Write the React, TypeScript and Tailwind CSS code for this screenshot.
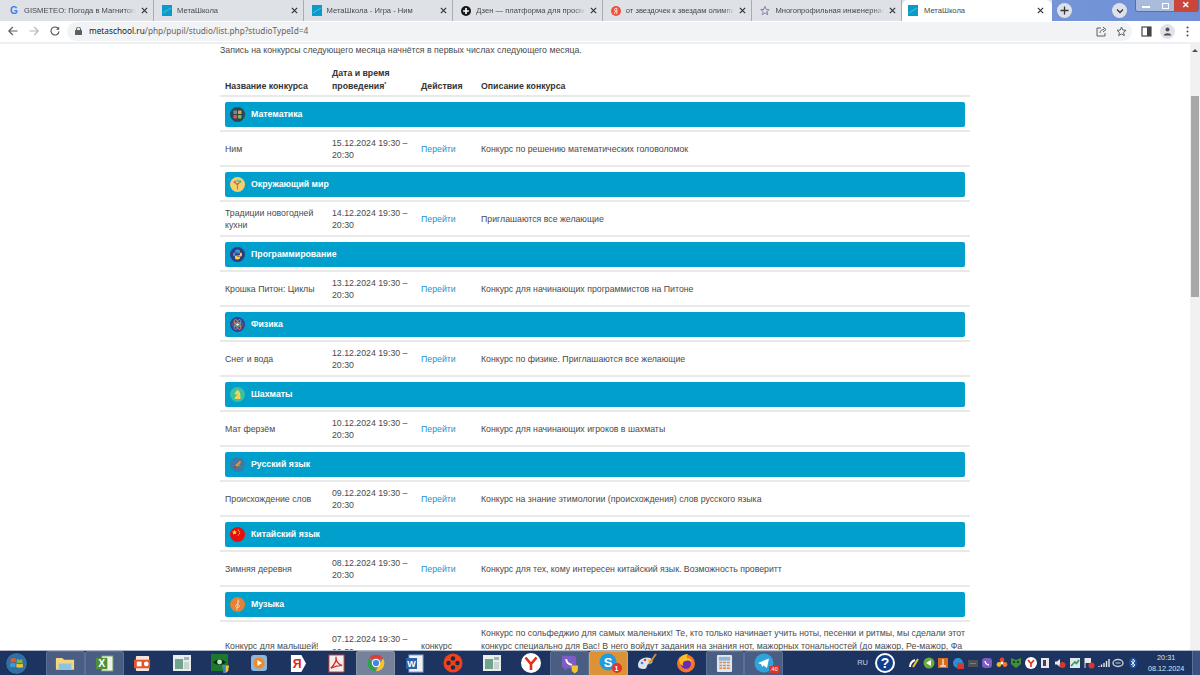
const tabs = [
  { title: "GISMETEO: Погода в Магнитогорске", icon: "g" },
  { title: "МетаШкола", icon: "meta" },
  { title: "МетаШкола - Игра - Ним", icon: "meta" },
  { title: "Дзен — платформа для просмотра", icon: "dzen" },
  { title: "от звездочек к звездам олимпиада", icon: "ya" },
  { title: "Многопрофильная инженерная олимпиада", icon: "star" },
];

const sections = [
  { name: "Математика", icon: "math", title: "Ним", date: "15.12.2024 19:30 – 20:30", text: "Конкурс по решению математических головоломок" },
  { name: "Окружающий мир", icon: "world", title: "Традиции новогодней кухни", date: "14.12.2024 19:30 – 20:30", text: "Приглашаются все желающие" },
  { name: "Программирование", icon: "python", title: "Крошка Питон: Циклы", date: "13.12.2024 19:30 – 20:30", text: "Конкурс для начинающих программистов на Питоне" },
  { name: "Физика", icon: "physics", title: "Снег и вода", date: "12.12.2024 19:30 – 20:30", text: "Конкурс по физике. Приглашаются все желающие" },
  { name: "Шахматы", icon: "chess", title: "Мат ферзём", date: "10.12.2024 19:30 – 20:30", text: "Конкурс для начинающих игроков в шахматы" },
  { name: "Русский язык", icon: "russian", title: "Происхождение слов", date: "09.12.2024 19:30 – 20:30", text: "Конкурс на знание этимологии (происхождения) слов русского языка" },
  { name: "Китайский язык", icon: "china", title: "Зимняя деревня", date: "08.12.2024 19:30 – 20:30", text: "Конкурс для тех, кому интересен китайский язык. Возможность проверитт" },
];

function TabIcon({ kind }: { kind: string }) {
  if (kind === "g") return <span className="w-[10px] text-center text-[10px] font-bold leading-none text-[#3b82e6]">G</span>;
  if (kind === "meta") return (
    <svg width="10" height="11" viewBox="0 0 10 11" className="shrink-0"><rect width="10" height="11" fill="#0a9bc9" /><path d="M1 8 L4 6 L9 3" stroke="#4cc3e4" fill="none" /></svg>
  );
  if (kind === "dzen") return (
    <svg width="10" height="10" viewBox="0 0 12 12" className="shrink-0"><circle cx="6" cy="6" r="6" fill="#17171c" /><path d="M6 2.5 V9.5 M2.5 6 H9.5" stroke="#fff" strokeWidth="2" /></svg>
  );
  if (kind === "ya") return (
    <svg width="10" height="10" viewBox="0 0 12 12" className="shrink-0"><circle cx="6" cy="6" r="6" fill="#f0503c" /><path d="M7 9.5 V2.8 H6 Q4.2 2.8 4.2 4.5 Q4.2 6 6 6 H7 M5.6 6 L3.9 9.5" stroke="#fff" fill="none" /></svg>
  );
  return (
    <svg width="10" height="11" viewBox="0 0 12 12" fill="none" className="shrink-0"><path d="M6 1 L7.4 4.6 L11 5 L8.2 7.3 L9.2 11 L6 9 L2.8 11 L3.8 7.3 L1 5 L4.6 4.6 Z" stroke="#8a6fa8" /><path d="M1 5 L4.6 4.6" stroke="#d9534f" /><path d="M8.2 7.3 L9.2 11" stroke="#4caf7a" /></svg>
  );
}

function CloseX() {
  return (
    <svg width="7" height="7" viewBox="0 0 8 8" className="shrink-0"><path d="M1 1 L7 7 M7 1 L1 7" stroke="#33363a" strokeWidth="1.4" /></svg>
  );
}

function Tab({ title, icon, first }: { title: string; icon: string; first: boolean }) {
  return (
    <div className={`flex h-[21px] items-center gap-[5px] border-r border-[#a9adb3] pr-[5px] ${first ? "w-[153px] pl-[8px]" : "w-[149.6px] pl-[8px]"}`}>
      <TabIcon kind={icon} />
      <span className="flex-1 overflow-hidden whitespace-nowrap text-[7.6px] text-[#45484d] [mask-image:linear-gradient(to_right,black_90%,transparent)]">{title}</span>
      <CloseX />
    </div>
  );
}

function CategoryIcon({ kind }: { kind: string }) {
  const wrap = (bg: string, children: React.ReactNode) => (
    <svg width="15" height="15" viewBox="0 0 15 15" className="shrink-0"><circle cx="7.5" cy="7.5" r="7.5" fill={bg} />{children}</svg>
  );
  if (kind === "math") return wrap("#2c4654", <>
    <rect x="3.5" y="3.5" width="3.5" height="3.5" rx="0.7" fill="#7f8c96" />
    <rect x="8" y="3.5" width="3.5" height="3.5" rx="0.7" fill="#d9a441" />
    <rect x="3.5" y="8" width="3.5" height="3.5" rx="0.7" fill="#d9536a" />
    <rect x="8" y="8" width="3.5" height="3.5" rx="0.7" fill="#7cba55" />
  </>);
  if (kind === "world") return wrap("#f4cf6f", <>
    <path d="M7.5 12.5 V6 M7.5 8 L5 5.5 M7.5 7.5 L10 5" stroke="#b9793c" strokeWidth="1.1" fill="none" />
    <circle cx="4.8" cy="5" r="1.3" fill="#e56b4e" /><circle cx="10" cy="4.6" r="1.3" fill="#5bb36a" /><circle cx="7.5" cy="3.8" r="1.2" fill="#62b4c9" />
  </>);
  if (kind === "python") return wrap("#2d3a84", <>
    <path d="M7.5 2.5 C5 2.5 5 3.5 5 5 H8 V5.6 H4 C2.6 5.6 2.6 9.2 4 9.2 H5 V7.7 C5 6.8 5.6 6.6 6.2 6.6 H9 C9.7 6.6 10 6 10 5.4 V4 C10 3 9 2.5 7.5 2.5 Z" fill="#4a8fd0" />
    <path d="M7.5 12.5 C10 12.5 10 11.5 10 10 H7 V9.4 H11 C12.4 9.4 12.4 5.8 11 5.8 H10 V7.3 C10 8.2 9.4 8.4 8.8 8.4 H6 C5.3 8.4 5 9 5 9.6 V11 C5 12 6 12.5 7.5 12.5 Z" fill="#f5cf4a" />
  </>);
  if (kind === "physics") return wrap("#3a3f8f", <>
    <ellipse cx="7.5" cy="7.5" rx="5.5" ry="2.2" fill="none" stroke="#c4527a" strokeWidth="0.8" />
    <ellipse cx="7.5" cy="7.5" rx="5.5" ry="2.2" fill="none" stroke="#d9a441" strokeWidth="0.8" transform="rotate(60 7.5 7.5)" />
    <ellipse cx="7.5" cy="7.5" rx="5.5" ry="2.2" fill="none" stroke="#5bb3c9" strokeWidth="0.8" transform="rotate(120 7.5 7.5)" />
    <circle cx="7.5" cy="7.5" r="1.3" fill="#fff" />
  </>);
  if (kind === "chess") return wrap("#3fbf9b", <>
    <path d="M4.8 12 H10.5 V10.6 C10.5 7.5 10.3 3.4 7 3 L6.4 4.3 L4.5 6.6 L5.3 7.7 L7.4 7 C7.4 8.4 5.6 9.3 4.8 10.6 Z" fill="#f6d25a" />
  </>);
  if (kind === "russian") return wrap("#3b7ba6", <>
    <path d="M4 11 L5 8.5 L9.8 3.8 L11.2 5.2 L6.5 10 Z" fill="#e8913a" /><path d="M4 11 L5 8.5 L6.5 10 Z" fill="#3a3f60" />
    <path d="M8 7.5 L10 9.5" stroke="#d9c14a" strokeWidth="0.8" />
  </>);
  if (kind === "china") return wrap("#e60f0f", <>
    <path d="M4.5 2.8 L5.2 4.6 L7 4.7 L5.6 5.8 L6.1 7.6 L4.5 6.6 L2.9 7.6 L3.4 5.8 L2 4.7 L3.8 4.6 Z" fill="#fde047" />
    <circle cx="8.4" cy="3.2" r="0.6" fill="#fde047" /><circle cx="9.6" cy="4.8" r="0.6" fill="#fde047" /><circle cx="9.6" cy="6.6" r="0.6" fill="#fde047" /><circle cx="8.3" cy="8" r="0.6" fill="#fde047" />
  </>);
  return wrap("#e28138", <path d="M7.8 12.5 C6.3 12.8 6 11.2 7.2 11 M7.6 11 L8 2.6 C9.6 4.2 8.8 5.8 6.4 7.6 C4.2 9.4 6.6 11.4 9 10.2 C10.4 9 8.6 7 6.8 8.6" fill="none" stroke="#f6d9bd" strokeWidth="0.8" />);
}

function CategoryRow({ name, icon }: { name: string; icon: string }) {
  return (
    <div className="h-[35px] border-b-2 border-[#e9e9e9] pl-[5px] pr-[5px] pt-[5px]">
      <div className="flex h-[24.5px] items-center gap-[6px] rounded-[2px] bg-[#009fcc] pl-[5px] text-[8.75px] font-bold text-white">
        <CategoryIcon kind={icon} />
        <span>{name}</span>
      </div>
    </div>
  );
}

function ContestRow({ title, date, text }: { title: string; date: string; text: string }) {
  return (
    <div className="flex h-[35px] items-center border-b-2 border-[#e9e9e9] pt-[1px] text-[8.75px] leading-[12.5px] text-[#4a4a4a]">
      <div className="w-[112px] pl-[5px] pr-[12px]">{title}</div>
      <div className="w-[89px]"><div className="w-[80px]">{date}</div></div>
      <a className="w-[60px] text-[#2d8fd0]">Перейти</a>
      <div className="flex-1">{text}</div>
    </div>
  );
}

function Win({ className, children }: { className?: string; children: React.ReactNode }) {
  return <div className={`flex h-[25px] w-[38.8px] shrink-0 items-center justify-center ${className ?? ""}`}>{children}</div>;
}

const active = "rounded-[2px] border border-[#5c6f94] bg-[#4a5d82]";

function ThinWindowIcon() {
  return (
    <svg width="18" height="16" viewBox="0 0 18 16"><rect width="18" height="16" fill="#e8ecea" /><rect x="2" y="4" width="8" height="10" fill="#6ea38c" /><rect x="11" y="2" width="5" height="3" fill="#9db4c4" /><rect x="11" y="7" width="5" height="7" fill="#c9d3d0" /></svg>
  );
}

function Tray() {
  return (
    <div className="ml-[13px] flex w-[232px] shrink-0 items-center gap-[2.6px]">
      <svg width="12" height="12" viewBox="0 0 12 12"><path d="M2 10 Q2 5 7 3" stroke="#fff" strokeWidth="2" fill="none" /><path d="M5 10 L10 2" stroke="#e8c130" strokeWidth="2" /></svg>
      <svg width="12" height="12" viewBox="0 0 12 12"><circle cx="6" cy="6" r="5.5" fill="#6cab3a" /><path d="M3 6 L8 3 V9 Z" fill="#fff" /></svg>
      <svg width="12" height="12" viewBox="0 0 12 12"><rect x="1" y="1" width="10" height="10" fill="#d96a20" /><path d="M6 2 V9 M3 9 H9" stroke="#f8e4c8" strokeWidth="1.4" /></svg>
      <svg width="12" height="12" viewBox="0 0 12 12"><circle cx="6" cy="6" r="5" fill="#2f8fce" /><rect x="5" y="6" width="7" height="6" fill="#d7372c" /></svg>
      <svg width="12" height="12" viewBox="0 0 12 12"><rect x="1" y="3" width="10" height="7" fill="#4d5056" /><path d="M3 6.5 H9" stroke="#7a7d84" /></svg>
      <svg width="12" height="12" viewBox="0 0 12 12"><rect x="1" y="1" width="10" height="10" rx="3" fill="#7f5bc4" /><path d="M4 4 Q4.5 7.5 8 8" stroke="#fff" strokeWidth="1.3" fill="none" /></svg>
      <svg width="12" height="12" viewBox="0 0 12 12"><circle cx="6" cy="3" r="2.4" fill="#e8472c" /><circle cx="3" cy="7.5" r="2.4" fill="#f0b92d" /><circle cx="9" cy="7.5" r="2.4" fill="#f0792d" /><circle cx="6" cy="6" r="1.4" fill="#fff" /></svg>
      <svg width="12" height="12" viewBox="0 0 12 12"><path d="M1 1 L6 3 L11 1 V7 L6 11 L1 7 Z" fill="#3f8f3c" /><circle cx="4" cy="5" r="1" fill="#10240e" /><circle cx="8" cy="5" r="1" fill="#10240e" /></svg>
      <svg width="12" height="12" viewBox="0 0 12 12"><circle cx="6" cy="6" r="6" fill="#fff" /><path d="M3 3 L6 6.5 L9 3 M6 6.5 V10" stroke="#e8291c" strokeWidth="1.6" fill="none" /></svg>
      <svg width="12" height="12" viewBox="0 0 12 12"><rect x="2" y="1" width="8" height="10" fill="#e6e8ec" /><rect x="4" y="3" width="3" height="6" fill="#41444a" /></svg>
      <svg width="12" height="12" viewBox="0 0 12 12"><path d="M1 4.5 H3 L6 2 V10 L3 7.5 H1 Z" fill="#e6e8ec" /><circle cx="8.5" cy="8" r="3" fill="#d7372c" /></svg>
      <svg width="12" height="12" viewBox="0 0 12 12"><rect x="1" y="1" width="10" height="10" fill="#dfe6ee" /><path d="M2 9 L6 5 L7.5 6.5 L10 3" stroke="#2d9a5a" strokeWidth="1.6" fill="none" /></svg>
      <svg width="12" height="12" viewBox="0 0 12 12"><path d="M2 1 V11" stroke="#e6e8ec" /><path d="M2 1 H8 V6 H2 Z" fill="#e6e8ec" /><circle cx="8.5" cy="8.5" r="3" fill="#d7372c" /></svg>
      <svg width="12" height="12" viewBox="0 0 12 12"><path d="M1 10 V9 M3.5 10 V7.5 M6 10 V6 M8.5 10 V4 M11 10 V2" stroke="#e6e8ec" strokeWidth="1.4" /></svg>
      <svg width="12" height="12" viewBox="0 0 12 12" fill="none"><ellipse cx="6" cy="6" rx="5" ry="3.5" stroke="#c5ccd8" strokeWidth="1.4" /><path d="M3.5 6 H8.5" stroke="#c5ccd8" /></svg>
      <svg width="12" height="12" viewBox="0 0 12 12" fill="none"><ellipse cx="6" cy="6" rx="4" ry="5.5" fill="#1c4fa0" /><path d="M4 4 L8 8 L6 10 V2 L8 4 L4 8" stroke="#fff" strokeWidth="0.8" /></svg>
    </div>
  );
}

function Taskbar() {
  return (
    <footer className="flex h-[25px] shrink-0 items-center border-t border-[#aeb6c6] bg-[#1d3461] font-['Liberation_Sans',sans-serif] text-white">
      <div className="flex w-[46px] shrink-0 items-center pl-[5px]">
        <svg width="23" height="23" viewBox="0 0 24 24">
          <circle cx="12" cy="12" r="11.5" fill="#2f6fa5" stroke="#17264a" />
          <path d="M6 7 Q9 5.5 11.5 7 L11 11 Q8.5 9.8 5.5 11 Z" fill="#e2592c" />
          <path d="M12.5 7.2 Q15 8.6 18 7.5 L18.5 11.2 Q15.5 12.2 12 11 Z" fill="#7eb840" />
          <path d="M5.5 12 Q8.5 10.8 11 12 L10.6 16 Q8 15 5.2 16 Z" fill="#3f9ad6" />
          <path d="M12 12 Q15 13.2 18.5 12.2 L18.8 16 Q15.5 17 11.8 16 Z" fill="#f3c02e" />
        </svg>
      </div>
      <Win className={active}>
        <svg width="20" height="17" viewBox="0 0 22 18"><path d="M1 3 H8 L10 5 H21 V16 H1 Z" fill="#f3d77e" /><rect x="4" y="9" width="14" height="7" fill="#8cc4e6" /></svg>
      </Win>
      <Win className={active}>
        <svg width="19" height="17" viewBox="0 0 20 18"><rect x="7" y="1" width="12" height="16" fill="#eef3e6" stroke="#6b9a5a" /><rect x="1" y="3" width="12" height="12" fill="#4f8f3c" /><text x="7" y="13" textAnchor="middle" fontSize="11" fontWeight="700" fill="#fff">X</text></svg>
      </Win>
      <Win>
        <svg width="19" height="17" viewBox="0 0 20 18"><rect x="3" y="1" width="14" height="16" rx="1" fill="#f6e3da" /><rect x="1" y="5" width="17" height="9" fill="#e2562c" /><rect x="4" y="7" width="5" height="5" fill="#fff" /><circle cx="14" cy="9.5" r="2.5" fill="#fff" /></svg>
      </Win>
      <Win><ThinWindowIcon /></Win>
      <Win>
        <svg width="19" height="19" viewBox="0 0 20 20"><rect width="18" height="18" fill="#1c7a2c" /><path d="M2 9 Q9 2 16 9 Q9 14 2 9 Z" fill="#0a2a12" /><circle cx="9" cy="8.5" r="2.6" fill="#bfe6c4" /><path d="M12 12 L19 12 L18 18 L15.5 20 L13 18 Z" fill="#f2c230" /><path d="M15.5 12 V20 H13 L12 12 Z" fill="#3f7fd0" /></svg>
      </Win>
      <Win>
        <svg width="18" height="18" viewBox="0 0 18 18"><rect x="1" y="1" width="16" height="16" rx="3" fill="#8fb6d8" /><circle cx="9" cy="9" r="5.5" fill="#f08a24" /><path d="M7.4 6 L12 9 L7.4 12 Z" fill="#fff" /></svg>
      </Win>
      <Win>
        <svg width="17" height="19" viewBox="0 0 18 20"><path d="M1 1 H12 L17 10 L12 19 H1 Z" fill="#fff" /><text x="7.5" y="15" textAnchor="middle" fontSize="13" fontWeight="700" fill="#e2211c">Я</text></svg>
      </Win>
      <Win>
        <svg width="17" height="19" viewBox="0 0 18 20"><rect x="1" y="1" width="16" height="18" fill="#f6ecec" stroke="#b5423c" /><path d="M3 15 C7 11 9 6 8.5 3 C8 6 10 11 15 12 C11 12 7 13 3 15 Z" fill="none" stroke="#d22b20" strokeWidth="1.4" /></svg>
      </Win>
      <Win className="rounded-[2px] border border-[#8893a8] bg-[#76829a]">
        <svg width="20" height="20" viewBox="0 0 48 48">
          <path d="M24 4 A20 20 0 0 1 41.3 14 H24 Z" fill="#e33b2e" />
          <path d="M41.3 14 A20 20 0 0 1 24 44 L33 24 Z" fill="#f7c52b" />
          <path d="M24 44 A20 20 0 0 1 6.7 14 L15 24 Z" fill="#2ba24c" />
          <path d="M6.7 14 A20 20 0 0 1 24 4 V14 Z" fill="#e33b2e" />
          <circle cx="24" cy="24" r="10" fill="#fff" /><circle cx="24" cy="24" r="7.5" fill="#3f86ea" />
        </svg>
      </Win>
      <Win>
        <svg width="19" height="19" viewBox="0 0 19 19"><rect x="4" y="1" width="14" height="17" fill="#eef1f6" stroke="#8fa4c4" /><rect x="1" y="4" width="11" height="11" fill="#2f5fa8" /><text x="6.5" y="13" textAnchor="middle" fontSize="9" fontWeight="700" fill="#fff">W</text></svg>
      </Win>
      <Win>
        <svg width="20" height="20" viewBox="0 0 20 20"><circle cx="10" cy="10" r="9.5" fill="#f0431c" /><circle cx="10" cy="5.5" r="2.2" fill="#1d2a44" /><circle cx="5.5" cy="10" r="2.2" fill="#1d2a44" /><circle cx="14.5" cy="10" r="2.2" fill="#1d2a44" /><circle cx="10" cy="14.5" r="2.2" fill="#1d2a44" /></svg>
      </Win>
      <Win><ThinWindowIcon /></Win>
      <Win>
        <svg width="20" height="20" viewBox="0 0 20 20"><circle cx="10" cy="10" r="10" fill="#fff" /><path d="M4.5 4.5 L10 11 L15.5 4.5 M10 11 V17" stroke="#e8291c" strokeWidth="2.6" fill="none" /></svg>
      </Win>
      <Win className={active}>
        <svg width="21" height="21" viewBox="0 0 22 22"><path d="M3 3 H15 Q18 3 18 6 V13 Q18 16 15 16 H9 L6 19 V16 Q3 16 3 13 Z" fill="#7f5bc4" /><path d="M7.5 6.5 Q8 11.5 13.5 12.5" stroke="#fff" strokeWidth="2" fill="none" /><path d="M13 13 H20 L19.5 19 L16.5 21.5 L13.5 19 Z" fill="#f2c230" /></svg>
      </Win>
      <Win className="rounded-[2px] border border-[#d9a45c] bg-[#dc9336]">
        <div className="relative h-[20px] w-[20px]">
          <svg width="18" height="18" viewBox="0 0 18 18"><circle cx="9" cy="9" r="8.5" fill="#1f9ce0" /><text x="9" y="14" textAnchor="middle" fontSize="13" fontWeight="700" fill="#fff">S</text></svg>
          <span className="absolute bottom-0 right-[-3px] flex h-[10px] w-[10px] items-center justify-center rounded-full bg-[#e2322b] text-[7px] font-bold leading-none">1</span>
        </div>
      </Win>
      <Win>
        <svg width="22" height="20" viewBox="0 0 22 20"><path d="M2 12 C2 6 9 3 14 5 C18 7 17 11 13 11 C10 11 12 16 8 16 C4 16 2 15 2 12 Z" fill="#dbe3ee" /><circle cx="6" cy="10" r="1.3" fill="#3f86ea" /><circle cx="9" cy="7" r="1.3" fill="#e33b2e" /><circle cx="13" cy="7.5" r="1.3" fill="#f7c52b" /><path d="M13 11 L20 1" stroke="#c98a3a" strokeWidth="2" /></svg>
      </Win>
      <Win>
        <svg width="20" height="20" viewBox="0 0 20 20"><circle cx="10" cy="10.5" r="9" fill="#f5742a" /><circle cx="10" cy="11" r="5" fill="#6a2bb8" /><path d="M3 6 Q7 1 12 1 Q10 3 11 5 Q15 5 16.5 9 Q13 6.5 9 8 Q6 9 7 13 Q3 11 3 6 Z" fill="#fbbf24" /></svg>
      </Win>
      <Win className={active}>
        <svg width="17" height="19" viewBox="0 0 18 20"><rect x="1" y="1" width="16" height="18" rx="1" fill="#dfe6ee" /><rect x="3" y="3" width="12" height="4" fill="#8fb6d8" /><path d="M3.5 9 H6.5 M7.5 9 H10.5 M11.5 9 H14.5 M3.5 12 H6.5 M7.5 12 H10.5 M11.5 12 H14.5 M3.5 15 H6.5 M7.5 15 H10.5 M11.5 15 H14.5" stroke="#d98a4a" strokeWidth="1.6" /></svg>
      </Win>
      <Win className={active}>
        <div className="relative h-[20px] w-[20px]">
          <svg width="20" height="20" viewBox="0 0 20 20"><circle cx="10" cy="10" r="9.5" fill="#2fa3dc" /><path d="M4 10 L15 5.5 L13 15 L9.5 12.5 L8 14 L7.5 11.5 Z" fill="#fff" /></svg>
          <span className="absolute bottom-0 right-[-5px] bg-[#d7372c] px-[1px] text-[5.5px] leading-[7px]">.40</span>
        </div>
      </Win>
      <div className="ml-[74px] w-[14px] text-[7.5px] leading-none text-[#c5d0e4]">RU</div>
      <div className="ml-[4px] flex h-[20px] w-[20px] shrink-0 items-center justify-center rounded-full border-2 border-white bg-[#0e3f91] text-[14px] font-bold">?</div>
      <Tray />
      <div className="ml-[4px] w-[44px] shrink-0 text-center text-[7.25px] leading-[11px] text-[#d9e1ee]">
        <div>20:31</div>
        <div>08.12.2024</div>
      </div>
      <div className="ml-auto h-full w-[8px] border-l border-[#5c6f94] bg-[#3a5080]" />
    </footer>
  );
}

export default function App() {
  return (
    <div className="flex h-[675px] w-[1200px] flex-col overflow-hidden bg-white font-['Liberation_Sans',sans-serif]">
      <div className="flex h-[21px] shrink-0 bg-gradient-to-r from-[#9db5e4] to-[#6f90d6]">
        <div className="flex h-full w-[1052px] bg-[#dee1e6] pl-[1px]">
          {tabs.map((t, i) => <Tab key={t.title} title={t.title} icon={t.icon} first={i === 0} />)}
          <div className="flex h-full flex-1 items-center gap-[6px] rounded-t-[6px] bg-white pl-[6px] pr-[8px]">
            <TabIcon kind="meta" />
            <span className="flex-1 text-[7.6px] text-[#45484d]">МетаШкола</span>
            <CloseX />
          </div>
        </div>
        <div className="ml-[5px] mt-[3px] flex h-[15px] w-[15px] items-center justify-center rounded-full bg-[#dee1e6]">
          <svg width="9" height="9" viewBox="0 0 9 9"><path d="M4.5 0.5 V8.5 M0.5 4.5 H8.5" stroke="#33363a" strokeWidth="1.3" /></svg>
        </div>
        <div className="ml-[40px] mt-[3px] flex h-[15px] w-[15px] items-center justify-center rounded-full bg-[#dee1e6]">
          <svg width="8" height="6" viewBox="0 0 8 6"><path d="M1 1.5 L4 4.5 L7 1.5" stroke="#33363a" strokeWidth="1.3" fill="none" /></svg>
        </div>
        <div className="ml-[8px] flex h-[12px] overflow-hidden rounded-b-[3px] border border-t-0 border-[#5a6f9c]">
          <div className="flex w-[20px] items-center justify-center bg-[#a9bcdc]"><div className="mt-[3px] h-[2px] w-[8px] bg-white" /></div>
          <div className="flex w-[18px] items-center justify-center bg-[#a9bcdc]"><div className="h-[6px] w-[7px] border border-white" /></div>
          <div className="flex w-[24px] items-center justify-center bg-[#c8473a] text-[9px] font-bold leading-none text-white">✕</div>
        </div>
      </div>

      <div className="flex h-[23px] shrink-0 items-center border-b-2 border-[#eef0f2] bg-white pb-[1px]">
        <div className="flex w-[67px] shrink-0 items-center gap-[11px] pl-[8px]">
          <svg width="10" height="10" viewBox="0 0 10 10" fill="none"><path d="M9.5 5 H1 M4.8 1 L0.8 5 L4.8 9" stroke="#5b5f66" strokeWidth="1.2" /></svg>
          <svg width="10" height="10" viewBox="0 0 10 10" fill="none"><path d="M0.5 5 H9 M5.2 1 L9.2 5 L5.2 9" stroke="#b5b8bd" strokeWidth="1.2" /></svg>
          <svg width="10" height="10" viewBox="0 0 10 10" fill="none"><path d="M8.6 3.2 A4 4 0 1 0 9 5.4" stroke="#5b5f66" strokeWidth="1.2" /><path d="M9.2 0.6 V3.8 H6" fill="#5b5f66" /></svg>
        </div>
        <div className="flex h-[19px] w-[1065px] items-center rounded-full bg-[#f1f3f4] pl-[8px] pr-[5px] font-['Noto_Sans',sans-serif] text-[8.25px]">
          <svg width="7" height="8" viewBox="0 0 7 8" className="mr-[7px]"><rect y="3" width="7" height="5" rx="0.5" fill="#5b5f66" /><path d="M1.5 3 V2 A2 2 0 0 1 5.5 2 V3" stroke="#5b5f66" fill="none" /></svg>
          <span className="text-[#202124]">metaschool.ru</span>
          <span className="text-[#5f6368]">/php/pupil/studio/list.php?studioTypeId=4</span>
          <div className="ml-auto flex items-center gap-[9px]">
            <svg width="11" height="11" viewBox="0 0 11 11" fill="none"><path d="M5 2 H1 V10 H9 V7" stroke="#5b5f66" /><path d="M4 7 C4 4.5 6 3.5 8 3.5 M7 1 L10 3.5 L7 6" stroke="#5b5f66" /></svg>
            <svg width="11" height="11" viewBox="0 0 11 11" fill="none"><path d="M5.5 1 L6.8 4 L10 4.3 L7.6 6.4 L8.3 9.6 L5.5 8 L2.7 9.6 L3.4 6.4 L1 4.3 L4.2 4 Z" stroke="#5b5f66" /></svg>
          </div>
        </div>
        <div className="ml-[9px] flex items-center gap-[7.5px]">
          <svg width="11" height="11" viewBox="0 0 11 11"><rect x="1" y="1" width="9" height="9" fill="none" stroke="#43464b" strokeWidth="1.2" /><rect x="6" y="1" width="4" height="9" fill="#43464b" /></svg>
          <div className="flex h-[15px] w-[15px] items-center justify-center rounded-full bg-[#dfe3e8]">
            <svg width="9" height="9" viewBox="0 0 9 9" fill="#4a4e54"><circle cx="4.5" cy="2.6" r="2" /><path d="M0.8 8.5 C1 5.5 8 5.5 8.2 8.5 Z" /></svg>
          </div>
          <svg width="3" height="11" viewBox="0 0 3 11" className="ml-[3.5px]" fill="#43464b"><circle cx="1.5" cy="1.5" r="1" /><circle cx="1.5" cy="5.5" r="1" /><circle cx="1.5" cy="9.5" r="1" /></svg>
        </div>
      </div>

      <div className="flex min-h-0 flex-1">
        <main className="min-w-0 flex-1 overflow-hidden pl-[220px]">
          <div className="w-[750px]">
            <p className="h-[17px] text-[8.75px] leading-[12px] text-[#4a4a4a]">Запись на конкурсы следующего месяца начнётся в первых числах следующего месяца.</p>
            <div className="flex h-[36px] items-end border-b-2 border-[#e9e9e9] pb-[3px] text-[8.75px] font-bold leading-[12.5px] text-[#333]">
              <div className="w-[112px] pl-[5px]">Название конкурса</div>
              <div className="w-[89px]">Дата и время<br />проведения<sup className="text-[5px] leading-none">*</sup></div>
              <div className="w-[60px]">Действия</div>
              <div>Описание конкурса</div>
            </div>
            {sections.map((s) => (
              <div key={s.name}>
                <CategoryRow name={s.name} icon={s.icon} />
                <ContestRow title={s.title} date={s.date} text={s.text} />
              </div>
            ))}
            <CategoryRow name="Музыка" icon="music" />
            <div className="flex h-[47.5px] items-center py-[5px] text-[8.75px] leading-[12.5px] text-[#4a4a4a]">
              <div className="w-[112px] pl-[5px]">Конкурс для малышей!</div>
              <div className="w-[89px]"><div className="w-[80px]">07.12.2024 19:30 – 20:30</div></div>
              <div className="w-[60px]">конкурс</div>
              <div className="flex-1 self-start pr-[3px]">Конкурс по сольфеджио для самых маленьких! Те, кто только начинает учить ноты, песенки и ритмы, мы сделали этот конкурс специально для Вас! В него войдут задания на знания нот, мажорных тональностей (до мажор, Ре-мажор, Фа</div>
            </div>
          </div>
        </main>
        <div className="flex w-[10px] shrink-0 flex-col bg-[#f1f1f1] pt-[4px]">
          <svg width="10" height="5" viewBox="0 0 10 5" className="shrink-0"><path d="M5 1 L8 4 H2 Z" fill="#505050" /></svg>
          <div className="ml-[1px] mt-[43px] h-[201px] w-[8px] bg-[#a8a8a8]" />
        </div>
      </div>
      <Taskbar />
    </div>
  );
}
